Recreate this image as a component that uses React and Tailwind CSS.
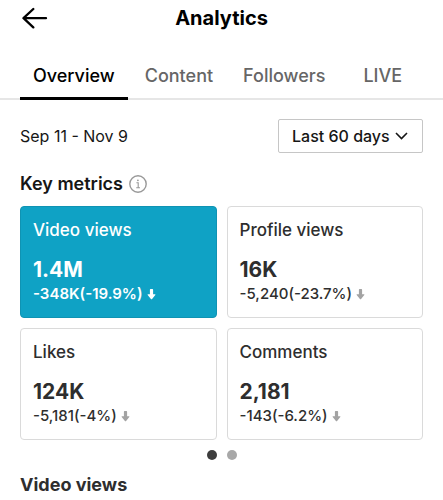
import { useState } from "react";

const tabs = ["Overview", "Content", "Followers", "LIVE"];

const metrics = [
  { label: "Video views", value: "1.4M", change: "-348K(-19.9%)" },
  { label: "Profile views", value: "16K", change: "-5,240(-23.7%)" },
  { label: "Likes", value: "124K", change: "-5,181(-4%)" },
  { label: "Comments", value: "2,181", change: "-143(-6.2%)" },
];

function BackArrow() {
  return (
    <svg width="26" height="22" viewBox="0 0 26 22" fill="none" stroke="currentColor" strokeWidth="2.3" strokeLinecap="round" strokeLinejoin="round" aria-hidden="true">
      <path d="M24 11.2H1.5M11.3 2L1.5 11.2l9.8 9.2" />
    </svg>
  );
}

function DownArrow() {
  return (
    <svg width="9" height="12" viewBox="0 0 9 12" fill="currentColor" aria-hidden="true">
      <path d="M3.6 1h1.8q.7 0 .7.7v4.6h1.8q1 0 .4.8L5.1 11q-.6.7-1.2 0L.7 7.1q-.6-.8.4-.8h1.8V1.7q0-.7.7-.7z" />
    </svg>
  );
}

function InfoIcon() {
  return (
    <svg width="18" height="18" viewBox="0 0 18 18" fill="none" stroke="currentColor" strokeWidth="1.4" aria-hidden="true">
      <circle cx="9" cy="9" r="8.2" />
      <path d="M7.4 7.7h1.8v5M7.2 12.7h3.8" strokeWidth="1.1" />
      <circle cx="8.9" cy="5.3" r="0.9" fill="currentColor" stroke="none" />
    </svg>
  );
}

function MetricCard({ label, value, change, selected, onSelect }) {
  return (
    <button
      type="button"
      aria-pressed={selected}
      onClick={onSelect}
      className={`flex flex-col items-start rounded-[4px] border px-3 py-[11px] text-left ${
        selected
          ? "border-[#0f93b3] bg-[#0fa2c5] text-white"
          : "border-[#dadada] bg-white text-[#2e2e2e]"
      }`}
    >
      <span className="text-[17px] leading-6 font-medium">{label}</span>
      <span className="mt-4 text-[21px] leading-6 font-bold">{value}</span>
      <span
        className={`flex items-center gap-1 text-[15px] leading-6 ${
          selected ? "font-semibold" : "font-medium"
        }`}
      >
        {change}
        <span className={selected ? "text-white" : "text-[#a3a3a3]"}>
          <DownArrow />
        </span>
      </span>
    </button>
  );
}

export default function App() {
  const [tab, setTab] = useState("Overview");
  const [metric, setMetric] = useState("Video views");
  const [page, setPage] = useState(0);

  return (
    <div className="bg-white font-['Inter','Liberation_Sans',sans-serif] text-[#161616]">
      <header className="grid h-9 grid-cols-[1fr_auto_1fr] items-center px-[22px] text-black">
        <button type="button" aria-label="Back" className="justify-self-start">
          <BackArrow />
        </button>
        <h1 className="text-[20px] leading-6 font-bold">Analytics</h1>
      </header>

      <nav className="mt-4 flex gap-1 border-b-2 border-[#e6e6e6] px-5" aria-label="Analytics sections">
        {tabs.map((name) => (
          <button
            key={name}
            type="button"
            onClick={() => setTab(name)}
            aria-current={tab === name ? "page" : undefined}
            className={`-mb-0.5 h-12 border-b-3 px-[13px] pt-0.5 text-[18px] leading-6 font-medium last:ml-2 ${
              tab === name
                ? "border-black text-black"
                : "border-transparent text-[#666666]"
            }`}
          >
            {name}
          </button>
        ))}
      </nav>

      <main className="px-5 pt-[19px]">
        <div className="flex items-center justify-between">
          <p className="text-[16px] leading-6">Sep 11 - Nov 9</p>
          <div className="grid w-[145px] items-center">
            <select
              aria-label="Date range"
              defaultValue="60"
              className="col-start-1 row-start-1 h-[34px] appearance-none rounded-[2px] border border-[#c6c6c6] bg-white pl-[13px] text-[16px] leading-6 font-medium"
            >
              <option value="7">Last 7 days</option>
              <option value="28">Last 28 days</option>
              <option value="60">Last 60 days</option>
            </select>
            <svg className="pointer-events-none col-start-1 row-start-1 mr-[15px] justify-self-end" width="13" height="8" viewBox="0 0 13 8" fill="none" stroke="currentColor" strokeWidth="1.6" aria-hidden="true">
              <path d="M1 1l5.5 5.5L12 1" />
            </svg>
          </div>
        </div>

        <div className="mt-[19px] flex items-center gap-1.5">
          <h2 className="text-[18px] leading-6 font-semibold">Key metrics</h2>
          <button type="button" aria-label="About key metrics" className="text-[#999999]">
            <InfoIcon />
          </button>
        </div>

        <div className="mt-2.5 grid grid-cols-2 gap-2.5">
          {metrics.map((m) => (
            <MetricCard
              key={m.label}
              {...m}
              selected={metric === m.label}
              onSelect={() => setMetric(m.label)}
            />
          ))}
        </div>

        <div className="mt-2.5 flex justify-center gap-2.5">
          {[0, 1].map((n) => (
            <button
              key={n}
              type="button"
              aria-label={`Metrics page ${n + 1}`}
              onClick={() => setPage(n)}
              className={`size-2.5 rounded-full ${page === n ? "bg-[#3d3d3d]" : "bg-[#a8a8a8]"}`}
            />
          ))}
        </div>

        <h2 className="mt-[13px] text-[18px] leading-6 font-bold text-[#2e2e2e]">Video views</h2>
      </main>
    </div>
  );
}
